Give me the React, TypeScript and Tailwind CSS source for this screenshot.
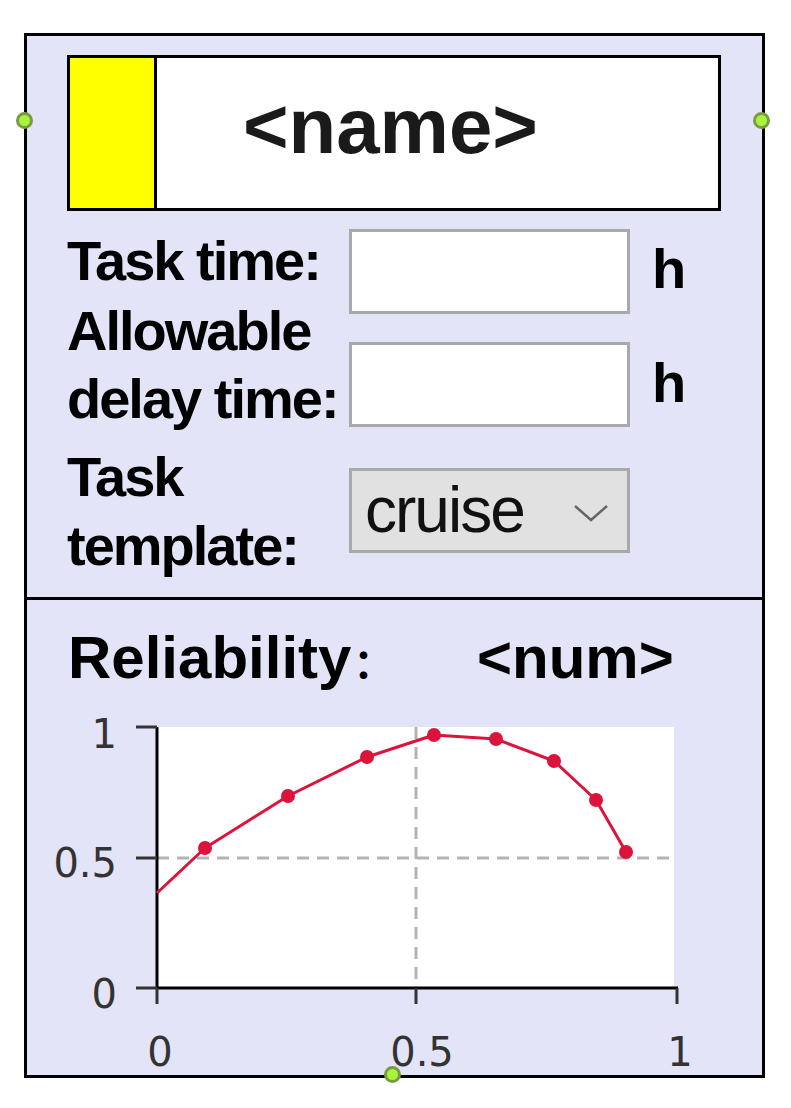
import React from 'react';

const points: [number, number][] = [
  [205, 848],
  [288, 796],
  [367, 757],
  [434, 735],
  [496, 739],
  [554, 761],
  [596, 800],
  [626, 852],
];

const Dot: React.FC<{ className: string }> = ({ className }) => (
  <div className={`absolute w-[17px] h-[17px] rounded-full bg-[#a6f53a] border-[3px] border-[#7a9a45] ${className}`} />
);

const Chart: React.FC = () => {
  const line = [[157, 893], ...points].map((p) => p.join(',')).join(' ');
  return (
    <svg width="735" height="383" viewBox="27 692 735 383" className="block overflow-visible">
      <rect x="157" y="727" width="517" height="261" fill="#ffffff" />
      {/* grid */}
      <line x1="157" y1="858" x2="674" y2="858" stroke="#b3b3b3" strokeWidth="3" strokeDasharray="12 8" />
      <line x1="416" y1="727" x2="416" y2="988" stroke="#b3b3b3" strokeWidth="3" strokeDasharray="12 8" />
      {/* axes */}
      <line x1="157" y1="727" x2="157" y2="989" stroke="#000" strokeWidth="3" />
      <line x1="156" y1="988" x2="678" y2="988" stroke="#000" strokeWidth="3" />
      {[727, 858, 988].map((y) => (
        <line key={y} x1="136" y1={y} x2="157" y2={y} stroke="#333" strokeWidth="3" />
      ))}
      {[157, 416, 677].map((x) => (
        <line key={x} x1={x} y1="988" x2={x} y2="1004" stroke="#333" strokeWidth="3" />
      ))}
      <g fontFamily="'DejaVu Sans', sans-serif" fontSize="40" fill="#333">
        <text x="117" y="748" textAnchor="end">1</text>
        <text x="117" y="877" textAnchor="end">0.5</text>
        <text x="117" y="1008" textAnchor="end">0</text>
        <text x="160" y="1066" textAnchor="middle">0</text>
        <text x="422" y="1066" textAnchor="middle">0.5</text>
        <text x="680" y="1066" textAnchor="middle">1</text>
      </g>
      <polyline points={line} fill="none" stroke="#dc143c" strokeWidth="3" strokeLinejoin="round" />
      {points.map(([x, y]) => (
        <circle key={x} cx={x} cy={y} r="7" fill="#dc143c" />
      ))}
    </svg>
  );
};

const App: React.FC = () => {
  return (
    <div className="w-[791px] h-[1108px] bg-white pt-[33px] pl-[24px] font-['Liberation_Sans','Noto_Sans_CJK_SC',sans-serif] text-black">
      <div className="relative w-[741px] h-[1045px] border-[3px] border-black bg-[#e4e4f8]">
        <Dot className="left-[-11px] top-[76px]" />
        <Dot className="left-[726px] top-[76px]" />
        <Dot className="left-[357px] top-[1030px]" />

        {/* Top section */}
        <div className="px-[40px] pt-[19px] pb-[17px] border-b-[3px] border-black">
          <div className="w-[654px] h-[156px] border-[3px] border-black flex bg-white">
            <div className="w-[87px] bg-[#ffff00] border-r-[3px] border-black" />
            <div className="pl-[86px] pt-[29px] text-[78px] leading-[78px] font-bold text-[#1a1a1a]">&lt;name&gt;</div>
          </div>

          <div className="mt-[16px] flex">
            <div className="w-[282px] text-[56px] font-bold tracking-[-2px]">
              <div className="leading-[68px]">Task time:</div>
              <div className="mt-[2px] leading-[68px]">
                Allowable
                <br />
                delay time:
              </div>
              <div className="mt-[9px] leading-[69px]">
                Task
                <br />
                template:
              </div>
            </div>

            <div className="w-[281px]">
              <div className="mt-[2px] h-[85px] border-[3px] border-[#a9a9a9] bg-white" />
              <div className="mt-[28px] h-[85px] border-[3px] border-[#a9a9a9] bg-white" />
              <div className="mt-[41px] h-[85px] border-[3px] border-[#a9a9a9] bg-[#e1e1e1] flex items-start">
                <span className="pl-[13px] pt-[7px] text-[64px] leading-[64px] tracking-[-2px] text-[#111]">cruise</span>
                <svg width="36" height="20" viewBox="0 0 36 20" className="ml-auto mr-[18px] mt-[32px]">
                  <polyline points="2,3 18,17 34,3" fill="none" stroke="#666" strokeWidth="2.5" />
                </svg>
              </div>
            </div>

            <div className="ml-[22px] text-[56px] font-bold">
              <div className="mt-[8px] leading-[68px]">h</div>
              <div className="mt-[46px] leading-[68px]">h</div>
            </div>
          </div>
        </div>

        {/* Bottom section */}
        <div>
          <div className="flex h-[92px] pl-[41px] pt-[24px] text-[60px] leading-[68px] font-bold">
            <span className="w-[409px]">
              Reliability<span className="text-[40px] leading-[0px] ml-[2px]">：</span>
            </span>
            <span>&lt;num&gt;</span>
          </div>
          <Chart />
        </div>
      </div>
    </div>
  );
};

export default App;
